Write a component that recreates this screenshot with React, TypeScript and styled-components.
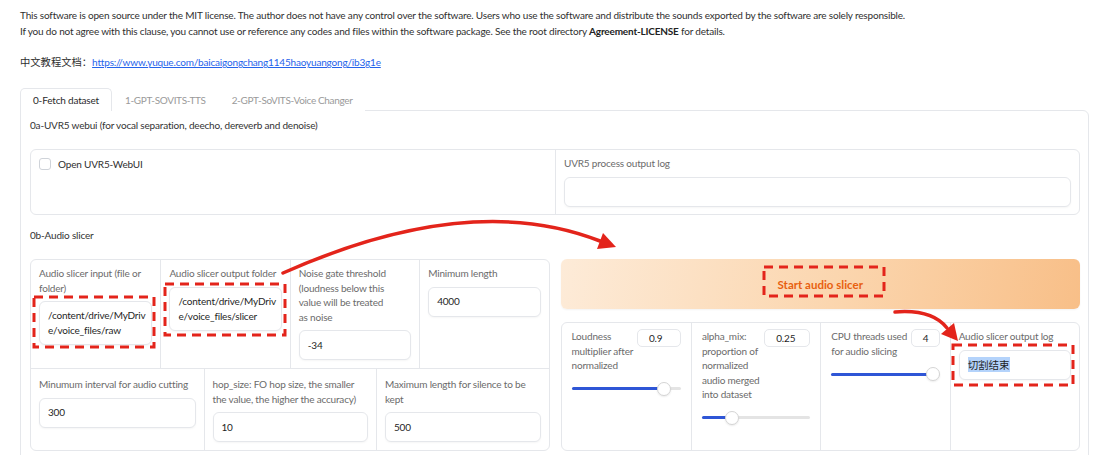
import React from "react";
import styled, { createGlobalStyle } from "styled-components";

const GlobalStyle = createGlobalStyle`
  html, body { margin: 0; padding: 0; background: #fff; }
  body {
    font-family: "Lato", "Noto Sans CJK SC", sans-serif;
    color: #2f2f2f;
    letter-spacing: -0.18px;
    -webkit-font-smoothing: antialiased;
  }
  * { box-sizing: border-box; }
`;

const Page = styled.div`
  position: relative;
  width: 1100px;
  height: 455px;
  overflow: hidden;
  padding: 7px 11px 0 20px;
`;

const Notice = styled.p`
  margin: 0;
  font-size: 10px;
  line-height: 16px;
  white-space: nowrap;
  color: #2f2f2f;
  b { font-weight: 700; color: #222; }
`;

const DocLine = styled.p`
  margin: 15px 0 0;
  font-size: 10.3px;
  line-height: 16px;
  letter-spacing: 0;
  color: #2f2f2f;
`;

const DocLink = styled.a`
  font-size: 10px;
  letter-spacing: -0.18px;
  color: #2563eb;
  text-decoration: underline;
`;

const TabBar = styled.div`
  display: flex;
  margin-top: 18px;
  height: 23px;
  position: relative;
  z-index: 1;
`;

const Tab = styled.div<{ $active?: boolean }>`
  display: flex;
  align-items: center;
  padding: 0 12px;
  font-size: 10px;
  letter-spacing: ${(p) => (p.$active ? "-0.18px" : "-0.35px")};
  color: ${(p) => (p.$active ? "#2a2a2a" : "#9a9a9a")};
  background: #fff;
  border: 1px solid ${(p) => (p.$active ? "#e5e7eb" : "transparent")};
  border-bottom: none;
  border-radius: 5px 5px 0 0;
`;

const Panel = styled.div`
  margin-top: -1px;
  border: 1px solid #e5e7eb;
  border-radius: 0 6px 6px 6px;
  padding: 6px 8px 20px 9px;
  height: 400px;
`;

const SectionTitle = styled.div<{ $gap: number }>`
  margin-top: ${(p) => p.$gap}px;
  font-size: 10px;
  line-height: 16px;
  color: #333;
`;

const Box = styled.div`
  border: 1px solid #e5e7eb;
  border-radius: 6px;
  background: #fff;
  overflow: hidden;
`;

const UvrBox = styled(Box)`
  margin-top: 16px;
  display: grid;
  grid-template-columns: 1fr 1fr;
  height: 66px;
`;

const CheckCell = styled.div`
  display: flex;
  align-items: flex-start;
  gap: 7px;
  padding: 8px 8px;
  font-size: 10px;
  line-height: 12px;
  color: #2f2f2f;
`;

const CheckSquare = styled.span`
  width: 12px;
  height: 12px;
  border: 1px solid #cfd3d9;
  border-radius: 3px;
  background: #fff;
  flex: none;
`;

const Cell = styled.div<{ $divider?: boolean; $pt?: number }>`
  display: flex;
  flex-direction: column;
  gap: 6px;
  padding: ${(p) => p.$pt ?? 6}px 8px 8px;
  border-left: ${(p) => (p.$divider ? "1px solid #e5e7eb" : "none")};
  min-width: 0;
`;

const Label = styled.div<{ $wrap?: number }>`
  font-size: 10px;
  line-height: 14.5px;
  color: #6b6b6b;
  max-width: ${(p) => (p.$wrap ? `${p.$wrap}px` : "none")};
`;

const TextBox = styled.div`
  min-height: 30px;
  padding: 6px 4px 6px 8px;
  border: 1px solid #e5e7eb;
  border-radius: 6px;
  box-shadow: 0 1px 2px rgba(0, 0, 0, 0.04);
  font-size: 10px;
  line-height: 15px;
  color: #1f1f1f;
  word-break: break-all;
  display: flex;
  align-items: center;
  background: #fff;
`;

const SlicerRow = styled.div`
  margin-top: 16px;
  display: grid;
  grid-template-columns: 1fr 1fr;
  gap: 11px;
  align-items: stretch;
`;

const ParamBox = styled(Box)`
  display: flex;
  flex-direction: column;
`;

const ParamRow = styled.div<{ $cols: number; $top?: boolean }>`
  display: grid;
  grid-template-columns: repeat(${(p) => p.$cols}, 1fr);
  border-top: ${(p) => (p.$top ? "1px solid #e5e7eb" : "none")};
  flex: ${(p) => (p.$top ? 1 : "none")};
`;

const RightCol = styled.div`
  display: flex;
  flex-direction: column;
  gap: 13px;
`;

const StartButton = styled.div`
  height: 50px;
  border-radius: 6px;
  background: linear-gradient(100deg, #fdebd8 0%, #fbd5ad 55%, #f8bf88 100%);
  box-shadow: 0 1px 2px rgba(0, 0, 0, 0.05);
  display: flex;
  align-items: center;
  justify-content: center;
  font-size: 11.5px;
  letter-spacing: 0;
  font-weight: 700;
  color: #e8600f;
`;

const SliderBox = styled(Box)`
  flex: 1;
  display: grid;
  grid-template-columns: repeat(4, 1fr);
`;

const SliderCell = styled.div<{ $divider?: boolean }>`
  padding: 6px 10px 10px;
  border-left: ${(p) => (p.$divider ? "1px solid #e5e7eb" : "none")};
  display: flex;
  flex-direction: column;
  min-width: 0;
`;

const SliderHead = styled.div`
  display: flex;
  align-items: flex-start;
  gap: 1px;
`;

const SliderLabel = styled(Label)`
  flex: 1;
  min-width: 0;
`;

const NumberBox = styled.div<{ $w: number }>`
  width: ${(p) => p.$w}px;
  height: 18px;
  flex: none;
  border: 1px solid #e5e7eb;
  border-radius: 5px;
  font-size: 10px;
  line-height: 16px;
  padding: 0 0 0 11px;
  color: #1f1f1f;
  background: #fff;
`;

const Track = styled.div`
  position: relative;
  margin-top: 9px;
  height: 14px;
  &::before {
    content: "";
    position: absolute;
    left: 0;
    right: 0;
    top: 5.5px;
    height: 3px;
    border-radius: 2px;
    background: #e4e4e4;
  }
`;

const Fill = styled.div`
  position: absolute;
  left: 0;
  top: 5.5px;
  height: 3px;
  border-radius: 2px;
  background: #2f56d6;
`;

const Thumb = styled.div`
  position: absolute;
  top: 0;
  width: 14px;
  height: 14px;
  margin-left: -7px;
  border-radius: 50%;
  background: #fff;
  border: 1px solid #d5d5d5;
  box-shadow: 0 1px 2px rgba(0, 0, 0, 0.08);
`;

const Selected = styled.span`
  background: #b4d3fb;
  font-family: "Noto Sans CJK SC", sans-serif;
  font-size: 10.5px;
  letter-spacing: 0;
`;

const Overlay = styled.svg`
  position: absolute;
  left: 0;
  top: 0;
  pointer-events: none;
`;

function Slider({ value, min, max }: { value: number; min: number; max: number }) {
  const r = (value - min) / (max - min);
  const pos = `calc(7px + (100% - 14px) * ${r})`;
  return (
    <Track>
      <Fill style={{ width: pos }} />
      <Thumb style={{ left: pos }} />
    </Track>
  );
}

function SliderParam({
  label,
  value,
  w,
  min,
  max,
  divider,
}: {
  label: string;
  value: number;
  w: number;
  min: number;
  max: number;
  divider?: boolean;
}) {
  return (
    <SliderCell $divider={divider}>
      <SliderHead>
        <SliderLabel>{label}</SliderLabel>
        <NumberBox $w={w}>{value}</NumberBox>
      </SliderHead>
      <Slider value={value} min={min} max={max} />
    </SliderCell>
  );
}

const RED = "#e3241b";

export default function App() {
  return (
    <>
      <GlobalStyle />
      <Page>
        <Notice>
          This software is open source under the MIT license. The author does not have any control over the software. Users who use the software and distribute the sounds exported by the software are solely responsible.
        </Notice>
        <Notice>
          If you do not agree with this clause, you cannot use or reference any codes and files within the software package. See the root directory <b>Agreement-LICENSE</b> for details.
        </Notice>
        <DocLine>
          中文教程文档：<DocLink href="#">https://www.yuque.com/baicaigongchang1145haoyuangong/ib3g1e</DocLink>
        </DocLine>

        <TabBar>
          <Tab $active>0-Fetch dataset</Tab>
          <Tab>1-GPT-SOVITS-TTS</Tab>
          <Tab>2-GPT-SoVITS-Voice Changer</Tab>
        </TabBar>

        <Panel>
          <SectionTitle $gap={0}>0a-UVR5 webui (for vocal separation, deecho, dereverb and denoise)</SectionTitle>
          <UvrBox>
            <CheckCell>
              <CheckSquare />
              <span>Open UVR5-WebUI</span>
            </CheckCell>
            <Cell $divider $pt={6}>
              <Label>UVR5 process output log</Label>
              <TextBox />
            </Cell>
          </UvrBox>

          <SectionTitle $gap={12}>0b-Audio slicer</SectionTitle>
          <SlicerRow>
            <ParamBox>
              <ParamRow $cols={4}>
                <Cell>
                  <Label>Audio slicer input (file or folder)</Label>
                  <TextBox>/content/drive/MyDrive/voice_files/raw</TextBox>
                </Cell>
                <Cell $divider>
                  <Label>Audio slicer output folder</Label>
                  <TextBox>/content/drive/MyDrive/voice_files/slicer</TextBox>
                </Cell>
                <Cell $divider>
                  <Label $wrap={90.8}>Noise gate threshold (loudness below this value will be treated as noise</Label>
                  <TextBox>-34</TextBox>
                </Cell>
                <Cell $divider>
                  <Label>Minimum length</Label>
                  <TextBox>4000</TextBox>
                </Cell>
              </ParamRow>
              <ParamRow $cols={3} $top>
                <Cell $pt={8}>
                  <Label>Minumum interval for audio cutting</Label>
                  <TextBox>300</TextBox>
                </Cell>
                <Cell $divider $pt={8}>
                  <Label>hop_size: FO hop size, the smaller the value, the higher the accuracy)</Label>
                  <TextBox>10</TextBox>
                </Cell>
                <Cell $divider $pt={8}>
                  <Label>Maximum length for silence to be kept</Label>
                  <TextBox>500</TextBox>
                </Cell>
              </ParamRow>
            </ParamBox>

            <RightCol>
              <StartButton>Start audio slicer</StartButton>
              <SliderBox>
                <SliderParam label="Loudness multiplier after normalized" value={0.9} w={44} min={0} max={1} />
                <SliderParam label="alpha_mix: proportion of normalized audio merged into dataset" value={0.25} w={46} min={0} max={1} divider />
                <SliderParam label="CPU threads used for audio slicing" value={4} w={29} min={1} max={4} divider />
                <Cell $divider $pt={6}>
                  <Label>Audio slicer output log</Label>
                  <TextBox>
                    <Selected>切割结束</Selected>
                  </TextBox>
                </Cell>
              </SliderBox>
            </RightCol>
          </SlicerRow>
        </Panel>

        <Overlay width="1100" height="455" viewBox="0 0 1100 455">
          <g fill="none" stroke={RED} strokeWidth="3" strokeDasharray="9 6">
            <rect x="34" y="297" width="120" height="50" />
            <rect x="165" y="284" width="120" height="51" />
            <rect x="764" y="267" width="120" height="29" />
            <rect x="953" y="345" width="120" height="40" />
          </g>
          <g fill="none" stroke={RED} strokeWidth="3.5" strokeLinecap="round">
            <path d="M283 273 Q 470 190 600 241" />
            <path d="M895 312 Q 932 309 947 328" />
          </g>
          <g fill={RED}>
            <polygon points="616,247 597,249 603,233" />
            <polygon points="958,341 941,334 954,323" />
          </g>
        </Overlay>
      </Page>
    </>
  );
}
